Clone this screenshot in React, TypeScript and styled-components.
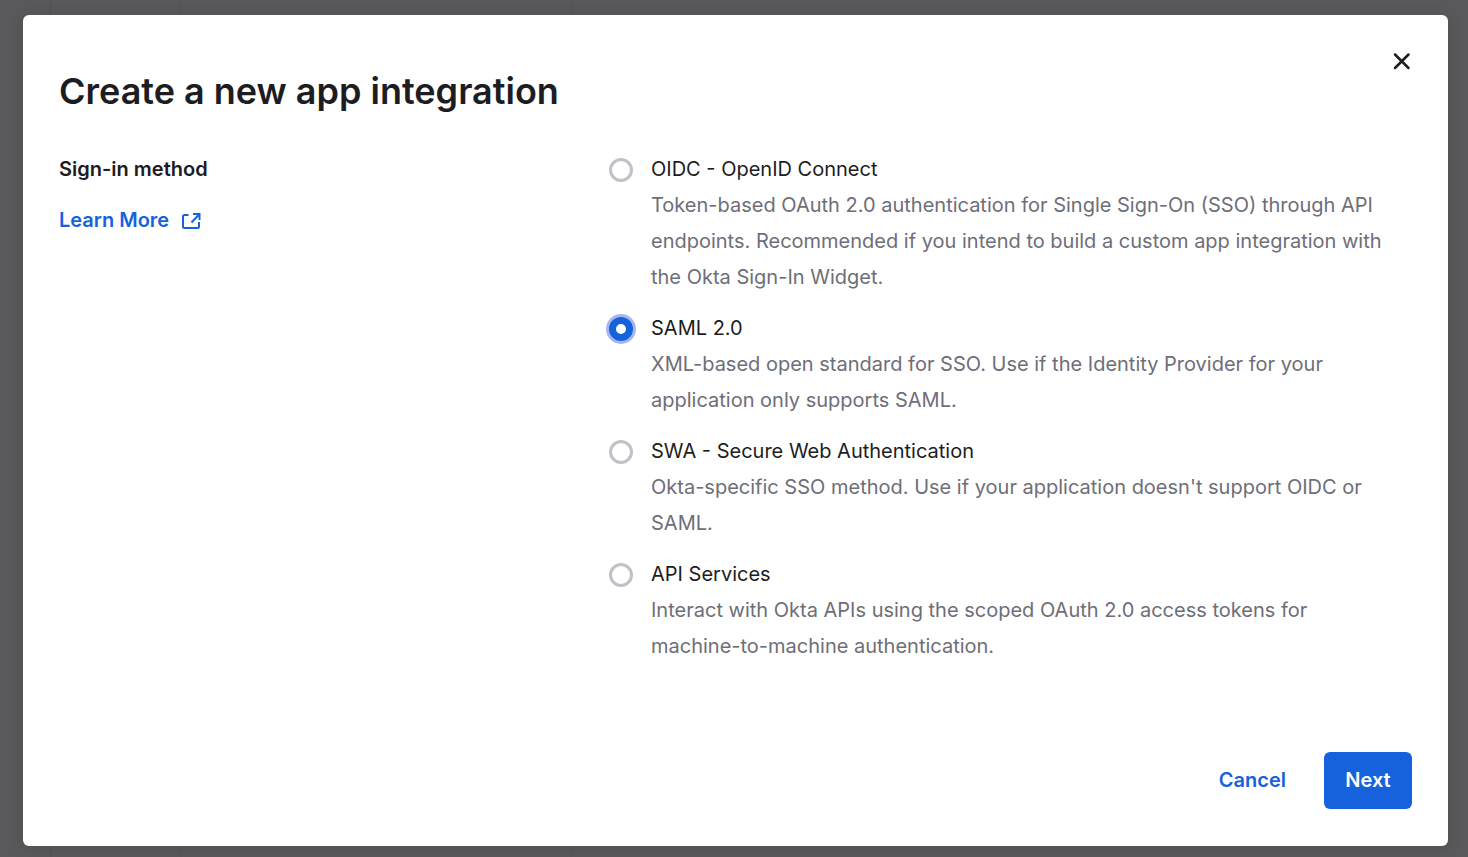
import React, { useState } from "react";
import styled, { createGlobalStyle } from "styled-components";

const GlobalStyle = createGlobalStyle`
  *, *::before, *::after { box-sizing: border-box; }
  body {
    margin: 0;
    background: #59595b;
    color: #1d1d21;
    font-family: Inter, "Liberation Sans", sans-serif;
    font-size: 20px;
    line-height: 36px;
  }
`;

const Page = styled.div`
  position: relative;
  min-height: 100vh;
  padding: 15px 20px 11px 23px;
`;

const Backdrop = styled.div`
  position: absolute;
  inset: 0;
  display: grid;
  grid-template-columns: 51px 130px 391px 1fr;
`;

const BackdropColumn = styled.div`
  border-right: 1px solid #525256;
  &:last-child { border-right: 0; }
`;

const Dialog = styled.section`
  position: relative;
  display: flex;
  flex-direction: column;
  min-height: calc(100vh - 26px);
  padding: 32px 36px 37px;
  border-radius: 6px;
  background: #fff;
  box-shadow: 0 2px 16px rgba(0, 0, 0, 0.12);
`;

const Header = styled.header`
  display: flex;
  align-items: flex-start;
  justify-content: space-between;
`;

const Title = styled.h1`
  margin: 20px 0 0;
  font-size: 36px;
  line-height: 48px;
  font-weight: 600;
`;

const CloseButton = styled.button`
  display: flex;
  padding: 4px 0;
  border: 0;
  background: none;
  color: #1d1d21;
  cursor: pointer;
`;

const Form = styled.form`
  display: flex;
  flex: 1;
  flex-direction: column;
  margin-top: 36px;
`;

const Fields = styled.div`
  display: grid;
  grid-template-columns: 547px 1fr;
  flex: 1;
`;

const FieldName = styled.h2`
  margin: 0 0 15px;
  font-size: 20px;
  line-height: 36px;
  font-weight: 600;
`;

const LearnMore = styled.a`
  display: inline-flex;
  align-items: center;
  gap: 12px;
  color: #1662dd;
  font-weight: 600;
  text-decoration: none;
`;

const Options = styled.div`
  display: flex;
  flex-direction: column;
  gap: 15px;
  padding-right: 16px;
`;

const Option = styled.div`
  display: grid;
  grid-template-columns: 24px 1fr;
  column-gap: 18px;
  padding-left: 3px;
`;

const Radio = styled.input`
  appearance: none;
  width: 24px;
  height: 24px;
  margin: 7px 0 0;
  border: 3px solid #c1c1c8;
  border-radius: 50%;
  background: #fff;
  &:checked {
    border: 7px solid #1662dd;
    box-shadow: 0 0 0 3px #a6b7f0;
  }
`;

const OptionLabel = styled.label`
  cursor: pointer;
`;

const Description = styled.p`
  grid-column: 2;
  margin: 0;
  color: #6e6e78;
`;

const Actions = styled.footer`
  display: flex;
  justify-content: flex-end;
  gap: 18px;
  margin-top: 32px;
`;

const Button = styled.button<{ $primary?: boolean }>`
  min-width: 88px;
  height: 57px;
  padding: 0 20px 2px;
  border: 0;
  border-radius: 6px;
  background: ${(p) => (p.$primary ? "#1662dd" : "transparent")};
  color: ${(p) => (p.$primary ? "#fff" : "#1662dd")};
  font: 600 20px/36px Inter, "Liberation Sans", sans-serif;
  cursor: pointer;
`;

const methods = [
  {
    id: "oidc",
    name: "OIDC - OpenID Connect",
    description:
      "Token-based OAuth 2.0 authentication for Single Sign-On (SSO) through API endpoints. Recommended if you intend to build a custom app integration with the Okta Sign-In Widget.",
  },
  {
    id: "saml",
    name: "SAML 2.0",
    description:
      "XML-based open standard for SSO. Use if the Identity Provider for your application only supports SAML.",
  },
  {
    id: "swa",
    name: "SWA - Secure Web Authentication",
    description:
      "Okta-specific SSO method. Use if your application doesn't support OIDC or SAML.",
  },
  {
    id: "api",
    name: "API Services",
    description:
      "Interact with Okta APIs using the scoped OAuth 2.0 access tokens for machine-to-machine authentication.",
  },
];

const CloseIcon = () => (
  <svg width="21" height="21" viewBox="0 0 21 21" fill="none" stroke="currentColor" strokeWidth="2.5" strokeLinecap="round" aria-hidden="true">
    <path d="M4 3.500l13.500 13.500M17.500 3.500L4 17" />
  </svg>
);

const ExternalIcon = () => (
  <svg width="20" height="20" viewBox="0 0 20 20" fill="none" stroke="currentColor" strokeWidth="2" aria-hidden="true">
    <path d="M7.500 5H3.500Q2 5 2 6.500V16.500Q2 18 3.500 18H16.500Q18 18 18 16.500V12" />
    <path d="M12 4H18.500V10M18 4.500L10.500 12.500" />
  </svg>
);

export default function App() {
  const [method, setMethod] = useState("saml");
  return (
    <>
      <GlobalStyle />
      <Page>
        <Backdrop aria-hidden="true">
          <BackdropColumn />
          <BackdropColumn />
          <BackdropColumn />
          <BackdropColumn />
        </Backdrop>
        <Dialog role="dialog" aria-labelledby="dialog-title">
          <Header>
            <Title id="dialog-title">Create a new app integration</Title>
            <CloseButton type="button" aria-label="Close">
              <CloseIcon />
            </CloseButton>
          </Header>
          <Form onSubmit={(e) => e.preventDefault()}>
            <Fields>
              <div>
                <FieldName id="method-name">Sign-in method</FieldName>
                <LearnMore href="#learn-more">
                  Learn More
                  <ExternalIcon />
                </LearnMore>
              </div>
              <Options role="radiogroup" aria-labelledby="method-name">
                {methods.map((m) => (
                  <Option key={m.id}>
                    <Radio
                      type="radio"
                      name="method"
                      id={m.id}
                      aria-describedby={`${m.id}-description`}
                      checked={method === m.id}
                      onChange={() => setMethod(m.id)}
                    />
                    <OptionLabel htmlFor={m.id}>{m.name}</OptionLabel>
                    <Description id={`${m.id}-description`}>{m.description}</Description>
                  </Option>
                ))}
              </Options>
            </Fields>
            <Actions>
              <Button type="button">Cancel</Button>
              <Button type="submit" $primary>
                Next
              </Button>
            </Actions>
          </Form>
        </Dialog>
      </Page>
    </>
  );
}
